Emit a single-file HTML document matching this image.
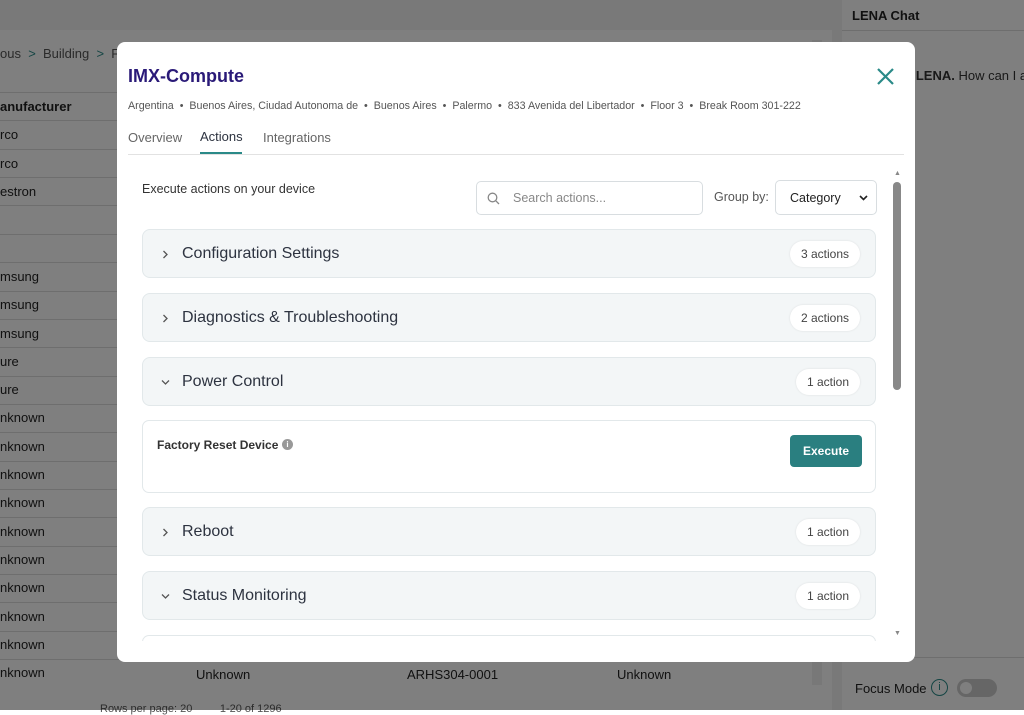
<!DOCTYPE html>
<html><head><meta charset="utf-8"><style>
*{box-sizing:border-box;margin:0;padding:0}
body{width:1024px;height:710px;overflow:hidden;font-family:"Liberation Sans",sans-serif;background:#fff;position:relative}
.bg{position:absolute;inset:0;background:#fff}
.abs{position:absolute;white-space:nowrap}
.row{position:absolute;left:0;width:812px;height:1px;background:#ddd}
.ov{position:absolute;inset:0;background:rgba(0,0,0,0.5)}
.modal{position:absolute;left:117px;top:42px;width:798px;height:620px;background:#fff;border-radius:8px;overflow:hidden}
.grp{position:absolute;left:25px;width:734px;height:49px;background:#f3f6f7;border:1px solid #e2e8ea;border-radius:8px}
.grp .t{position:absolute;left:39px;top:15px;font-size:16px;color:#2d3340;font-weight:500}
.grp svg{position:absolute;left:18px;top:20px}
.badge{position:absolute;right:15px;top:11px;height:26px;padding:0 11px;background:#fff;border-radius:13px;font-size:12px;color:#444;line-height:26px;box-shadow:0 0 2px rgba(0,0,0,.1)}
</style></head><body>
<div class="bg">
<div class="abs" style="left:0;top:0;width:832px;height:30px;background:#f3f3f3"></div>
<div class="abs" style="left:0;top:46px;font-size:13px;color:#555">ous &nbsp;<span style="color:#2a8a88">&gt;</span>&nbsp; Building &nbsp;<span style="color:#2a8a88">&gt;</span>&nbsp; F</div>
<div class="row" style="top:92px"></div>
<div class="abs" style="left:0;top:99px;font-size:13px;font-weight:bold;color:#222">anufacturer</div>
<div class="row" style="top:120px"></div>
<div class="abs" style="left:0;top:127px;font-size:13px;color:#222">rco</div><div class="row" style="top:149px"></div>
<div class="abs" style="left:0;top:156px;font-size:13px;color:#222">rco</div><div class="row" style="top:177px"></div>
<div class="abs" style="left:0;top:184px;font-size:13px;color:#222">estron</div><div class="row" style="top:205px"></div>
<div class="row" style="top:234px"></div>
<div class="abs" style="left:0;top:263px;font-size:13px;color:#222;line-height:28.3px;white-space:pre">msung
msung
msung
ure
ure
nknown
nknown
nknown
nknown
nknown
nknown
nknown
nknown
nknown
nknown</div>
<div class="row" style="top:262px"></div><div class="row" style="top:291px"></div><div class="row" style="top:319px"></div><div class="row" style="top:347px"></div><div class="row" style="top:376px"></div><div class="row" style="top:404px"></div><div class="row" style="top:432px"></div><div class="row" style="top:461px"></div><div class="row" style="top:489px"></div><div class="row" style="top:517px"></div><div class="row" style="top:546px"></div><div class="row" style="top:574px"></div><div class="row" style="top:602px"></div><div class="row" style="top:631px"></div><div class="row" style="top:659px"></div>
<div class="abs" style="left:196px;top:667px;font-size:13px;color:#222">Unknown</div>
<div class="abs" style="left:407px;top:667px;font-size:13px;color:#222">ARHS304-0001</div>
<div class="abs" style="left:617px;top:667px;font-size:13px;color:#222">Unknown</div>
<div class="abs" style="left:812px;top:40px;width:10px;height:645px;background:#f0f0f0"></div>
<div class="abs" style="left:100px;top:703px;font-size:11px;color:#555">Rows per page: 20 &nbsp;&nbsp;&nbsp;&nbsp;&nbsp;&nbsp;&nbsp; 1-20 of 1296</div>
<div class="abs" style="left:832px;top:0;width:10px;height:710px;background:#f3f3f3"></div>
<div class="abs" style="left:852px;top:8px;font-size:13px;font-weight:bold;color:#222">LENA Chat</div>
<div class="abs" style="left:842px;top:30px;width:182px;height:1px;background:#ddd"></div>
<div class="abs" style="left:905px;top:68px;font-size:13px;color:#333">n <b>LENA.</b> How can I a</div>
<div class="abs" style="left:842px;top:657px;width:182px;height:1px;background:#ddd"></div>
<div class="abs" style="left:855px;top:681px;font-size:13px;color:#222">Focus Mode</div>
<div class="abs" style="left:931px;top:679px;width:17px;height:17px;border:1.5px solid #2a8a88;border-radius:50%;font-size:11px;color:#2a8a88;text-align:center;line-height:14px">i</div>
<div class="abs" style="left:957px;top:679px;width:40px;height:18px;border-radius:9px;background:#ccc"><div style="position:absolute;left:3px;top:3px;width:12px;height:12px;border-radius:50%;background:#fff"></div></div>
</div>
<div class="ov"></div>
<div class="modal">
<div class="abs" style="left:11px;top:24px;font-size:18px;font-weight:bold;color:#2a1a78">IMX-Compute</div>
<svg class="abs" style="left:760px;top:26px" width="17" height="17" viewBox="0 0 17 17"><path d="M1 1L16 16M16 1L1 16" stroke="#2a8a88" stroke-width="2.2"/></svg>
<div class="abs" style="left:11px;top:58px;font-size:10.7px;color:#555">Argentina &nbsp;•&nbsp; Buenos Aires, Ciudad Autonoma de &nbsp;•&nbsp; Buenos Aires &nbsp;•&nbsp; Palermo &nbsp;•&nbsp; 833 Avenida del Libertador &nbsp;•&nbsp; Floor 3 &nbsp;•&nbsp; Break Room 301-222</div>
<div class="abs" style="left:11px;top:88px;font-size:13px;color:#666">Overview</div>
<div class="abs" style="left:83px;top:87px;font-size:13px;color:#2d3340;font-weight:500">Actions</div>
<div class="abs" style="left:146px;top:88px;font-size:13px;color:#666">Integrations</div>
<div class="abs" style="left:11px;top:112px;width:776px;height:1px;background:#e2e2e2"></div>
<div class="abs" style="left:83px;top:110px;width:42px;height:2px;background:#2a8a88"></div>
<div class="abs" style="left:0;top:126px;width:798px;height:473px;overflow:hidden">
<div class="abs" style="left:25px;top:14px;font-size:12.5px;color:#333">Execute actions on your device</div>
<div class="abs" style="left:359px;top:13px;width:227px;height:34px;border:1px solid #d8dde0;border-radius:5px"><svg style="position:absolute;left:10px;top:10px" width="13" height="13" viewBox="0 0 13 13"><circle cx="5.5" cy="5.5" r="4.3" fill="none" stroke="#888" stroke-width="1.3"/><path d="M8.7 8.7L12 12" stroke="#888" stroke-width="1.3"/></svg><span style="position:absolute;left:36px;top:9px;font-size:12.5px;color:#888">Search actions...</span></div>
<div class="abs" style="left:597px;top:22px;font-size:12.5px;color:#555">Group by:</div>
<div class="abs" style="left:658px;top:12px;width:102px;height:35px;border:1px solid #d8dde0;border-radius:5px"><span style="position:absolute;left:14px;top:10px;font-size:12.5px;color:#222">Category</span><svg style="position:absolute;right:8px;top:14px" width="9" height="6" viewBox="0 0 9 6"><path d="M1 1L4.5 4.5L8 1" fill="none" stroke="#222" stroke-width="1.6"/></svg></div>
<div class="grp" style="top:61px"><svg width="8" height="9" viewBox="0 0 8 9"><path d="M2.5 1L6 4.5L2.5 8" fill="none" stroke="#555" stroke-width="1.3"/></svg><span class="t">Configuration Settings</span><span class="badge">3 actions</span></div>
<div class="grp" style="top:125px"><svg width="8" height="9" viewBox="0 0 8 9"><path d="M2.5 1L6 4.5L2.5 8" fill="none" stroke="#555" stroke-width="1.3"/></svg><span class="t">Diagnostics &amp; Troubleshooting</span><span class="badge">2 actions</span></div>
<div class="grp" style="top:189px"><svg width="9" height="8" viewBox="0 0 9 8"><path d="M1 2.5L4.5 6L8 2.5" fill="none" stroke="#555" stroke-width="1.3"/></svg><span class="t">Power Control</span><span class="badge">1 action</span></div>
<div class="abs" style="left:25px;top:252px;width:734px;height:73px;border:1px solid #e2e8ea;border-radius:7px;background:#fff">
<span style="position:absolute;left:14px;top:17px;font-size:12px;font-weight:bold;color:#333">Factory Reset Device</span>
<span style="position:absolute;left:139px;top:18px;width:11px;height:11px;border-radius:50%;background:#999;color:#fff;font-size:8px;text-align:center;line-height:11px;font-weight:bold">i</span>
<span style="position:absolute;left:647px;top:14px;width:72px;height:32px;background:#2a7f80;border-radius:4px;color:#fff;font-size:12px;font-weight:bold;text-align:center;line-height:32px">Execute</span></div>
<div class="grp" style="top:339px"><svg width="8" height="9" viewBox="0 0 8 9"><path d="M2.5 1L6 4.5L2.5 8" fill="none" stroke="#555" stroke-width="1.3"/></svg><span class="t">Reboot</span><span class="badge">1 action</span></div>
<div class="grp" style="top:403px"><svg width="9" height="8" viewBox="0 0 9 8"><path d="M1 2.5L4.5 6L8 2.5" fill="none" stroke="#555" stroke-width="1.3"/></svg><span class="t">Status Monitoring</span><span class="badge">1 action</span></div>
<div class="abs" style="left:25px;top:467px;width:734px;height:30px;border:1px solid #e2e8ea;border-radius:7px;background:#fff"></div>
<div class="abs" style="left:775px;top:0;width:10px;height:473px;background:#fff"></div>
<div class="abs" style="left:777px;top:2px;font-size:7px;color:#888">▲</div>
<div class="abs" style="left:776px;top:14px;width:8px;height:208px;background:#888;border-radius:4px"></div>
<div class="abs" style="left:777px;top:462px;font-size:7px;color:#888">▼</div>
</div>
</div>
</body></html>
